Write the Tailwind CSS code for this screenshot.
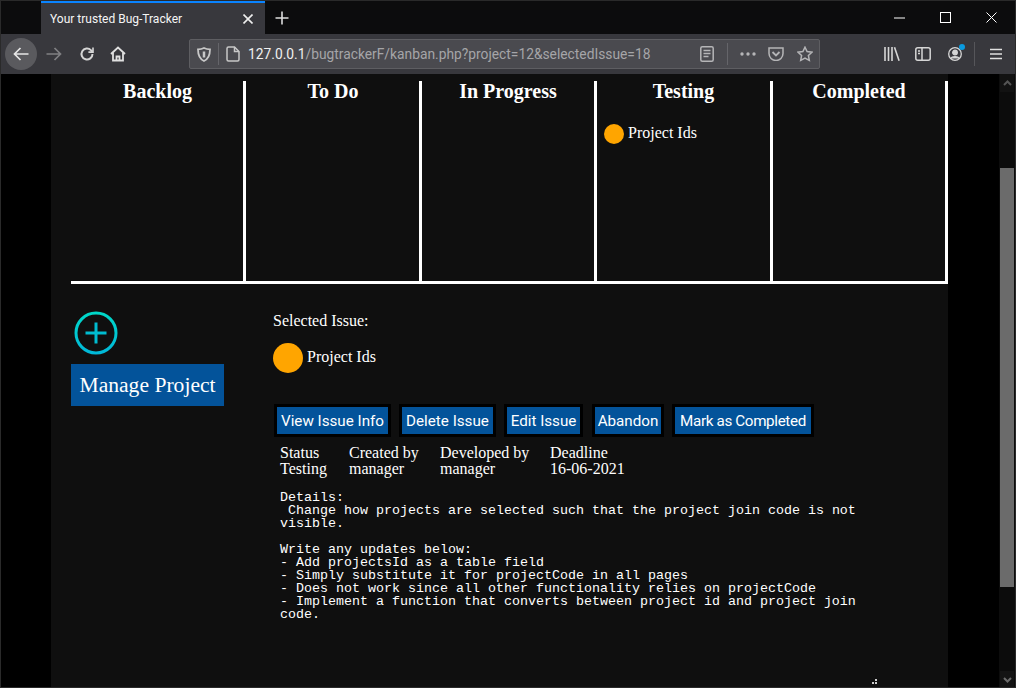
<!DOCTYPE html>
<html lang="en">
<head>
  <meta charset="UTF-8" />
  <title>Your trusted Bug-Tracker</title>
  <script src="https://cdn.jsdelivr.net/npm/@tailwindcss/browser@4"></script>
</head>
<body class="bg-black overflow-hidden">
<div class="relative w-[1016px] h-[688px] flex flex-col overflow-hidden font-['Liberation_Serif',serif] text-white">

  <!-- Tab strip -->
  <div class="h-[34px] bg-[#0c0c0d] flex items-stretch shrink-0 border-t border-[#0c0c0d]">
    <div class="ml-[41px] w-[224px] bg-[#38383d] border-t-2 border-[#0a84ff] flex items-center pl-[9px] pr-[12px] font-['Roboto',sans-serif] text-[12px] text-[#f5f5f5]">
      <span class="flex-1">Your trusted Bug-Tracker</span>
      <svg width="10" height="10" viewBox="0 0 10 10" class="stroke-[#eeeeee]" fill="none" stroke-width="1.6"><path d="M0.5 0.5l9 9M9.5 0.5l-9 9"/></svg>
    </div>
    <div class="w-[34px] flex items-center justify-center">
      <svg width="14" height="14" viewBox="0 0 14 14" class="stroke-[#dddddd]" fill="none" stroke-width="1.6"><path d="M7 0.5v13M0.5 7h13"/></svg>
    </div>
    <div class="flex-1"></div>
    <div class="w-[46px] flex items-center justify-center">
      <svg width="11" height="2" viewBox="0 0 11 2" class="stroke-white" fill="none"><path d="M0 1h11"/></svg>
    </div>
    <div class="w-[46px] flex items-center justify-center">
      <svg width="11" height="11" viewBox="0 0 11 11" class="stroke-white" fill="none"><rect x="0.5" y="0.5" width="10" height="10"/></svg>
    </div>
    <div class="w-[46px] mr-[2px] flex items-center justify-center">
      <svg width="11" height="11" viewBox="0 0 11 11" class="stroke-white" fill="none"><path d="M0.5 0.5l10 10M10.5 0.5l-10 10"/></svg>
    </div>
  </div>

  <!-- Toolbar -->
  <div class="h-[40px] bg-[#38383d] flex items-center shrink-0">
    <div class="ml-[5px] w-8 h-8 rounded-full bg-[#5a5a5e] flex items-center justify-center">
      <svg width="16" height="14" viewBox="0 0 16 14" class="stroke-[#e6e6e6]" fill="none" stroke-width="1.7"><path d="M15.5 7H1.5M7.5 1l-6 6 6 6"/></svg>
    </div>
    <svg width="16" height="14" viewBox="0 0 16 14" class="ml-[9px] stroke-[#808083]" fill="none" stroke-width="1.7"><path d="M0.5 7h14M8.5 1l6 6-6 6"/></svg>
    <svg width="16" height="16" viewBox="0 0 16 16" class="ml-[17px] stroke-[#d6d6d6]" fill="none" stroke-width="2"><path d="M13.5 8a5.5 5.5 0 1 1-1.6-3.9l1.6 1.6"/><path d="M14 1.500v4.600H9.400" stroke-width="1.600"/></svg>
    <svg width="16" height="16" viewBox="0 0 16 16" class="ml-[15px] stroke-[#e0e0e0]" fill="none" stroke-width="1.800"><path d="M1 8l7-6.500L15 8"/><path d="M3 6.500V14.500h10V6.500"/><path d="M6.500 14.500v-4h3v4"/></svg>

    <div class="ml-[63px] w-[631px] h-[30px] bg-[#4a4a4f] border border-[#5e5e62] rounded-[2px] flex items-center">
      <svg width="14" height="15" viewBox="0 0 14 15" class="ml-[7px] stroke-[#c8c8c8]" fill="none" stroke-width="1.800"><path d="M7 1c2 1 4 1.300 6 1.300 0 5-1.500 9.700-6 11.700C2.500 12 1 7.300 1 2.300 3 2.300 5 2 7 1z"/><path d="M7 4.500v6" stroke-width="2.500"/></svg>
      <div class="ml-[7px] w-px h-[22px] bg-[#65656a]"></div>
      <svg width="14" height="16" viewBox="0 0 14 16" class="ml-[7px] stroke-[#c8c8c8]" fill="none" stroke-width="1.500"><path d="M1 2.500a1.500 1.500 0 0 1 1.500-1.500H8.500L13 5.500v8a1.500 1.500 0 0 1-1.500 1.500h-9A1.500 1.500 0 0 1 1 13.500z"/><path d="M8.500 1v4.500H13"/></svg>
      <span class="ml-[8px] font-['Roboto',sans-serif] text-[13.8px] text-[#f0f0f0] whitespace-nowrap">127.0.0.1<span class="text-[#a5a5a8]">/bugtrackerF/kanban.php?project=12&amp;selectedIssue=18</span></span>
      <div class="flex-1"></div>
      <svg width="14" height="16" viewBox="0 0 14 16" class="stroke-[#b5b5b7]" fill="none" stroke-width="1.500"><rect x="0.800" y="0.800" width="12.400" height="14.400" rx="1.500"/><path d="M3.500 4.500h7M3.500 7.500h7M3.500 10.500h5"/></svg>
      <div class="ml-[13px] w-px h-[22px] bg-[#65656a]"></div>
      <svg width="16" height="4" viewBox="0 0 16 4" class="ml-[12px] fill-[#b5b5b7]"><circle cx="2" cy="2" r="1.700"/><circle cx="8" cy="2" r="1.700"/><circle cx="14" cy="2" r="1.700"/></svg>
      <svg width="16" height="14" viewBox="0 0 16 14" class="ml-[12px] stroke-[#b5b5b7]" fill="none" stroke-width="1.500"><path d="M1 1h14v5.500a7 7 0 0 1-14 0z"/><path d="M4.500 5l3.500 3.500L11.500 5" stroke-width="1.800"/></svg>
      <svg width="16" height="16" viewBox="0 0 16 16" class="ml-[13px] mr-[6px] stroke-[#b5b5b7]" fill="none" stroke-width="1.500"><path d="M8 1.200l2.100 4.400 4.800.6-3.500 3.300.9 4.800L8 12l-4.300 2.300.9-4.800L1.100 6.200l4.800-.6z"/></svg>
    </div>

    <svg width="16" height="14" viewBox="0 0 16 14" class="ml-[64px] stroke-[#d6d6d6]" fill="none" stroke-width="1.600"><path d="M1 0v14M4.500 0v14M8 0v14M10.500 0.300l4.600 13.400"/></svg>
    <svg width="16" height="14" viewBox="0 0 16 14" class="ml-[15px] stroke-[#d6d6d6]" fill="none" stroke-width="1.500"><rect x="0.800" y="0.800" width="14.400" height="12.400" rx="2"/><path d="M7 1v12M3 4h2M3 6.500h2"/></svg>
    <div class="relative ml-[17px] w-[14px] h-[14px]">
      <svg width="14" height="14" viewBox="0 0 14 14" class="stroke-[#d6d6d6]" fill="none" stroke-width="1.300"><circle cx="7" cy="7" r="6.300"/><circle cx="7" cy="5.500" r="2.300" class="fill-[#d6d6d6]"/><path d="M3 11.500c1-2.500 7-2.500 8 0" class="fill-[#d6d6d6]"/></svg>
      <div class="absolute -top-[3px] -right-[3px] w-[6px] h-[6px] rounded-full bg-[#0a9be0]"></div>
    </div>
    <div class="ml-[12px] w-px h-[24px] bg-[#56565a]"></div>
    <svg width="12" height="12" viewBox="0 0 12 12" class="ml-[15px] stroke-[#e0e0e0]" fill="none" stroke-width="1.700"><path d="M0 1.500h12M0 6h12M0 10.500h12"/></svg>
  </div>

  <!-- Page -->
  <div class="flex-1 flex min-h-0">
    <div class="w-[51px] bg-black shrink-0"></div>

    <main class="w-[897px] shrink-0 bg-[#0f0f0f] pl-[20px] pt-[7px]">
      <!-- Kanban board -->
      <div class="w-[877px] h-[203px] grid grid-cols-[175px_176px_175px_176px_175px] border-b-[3px] border-white">
        <div class="border-r-[3px] border-white">
          <h2 class="text-center text-[20px] font-bold leading-[20px] pl-[1px]">Backlog</h2>
        </div>
        <div class="border-r-[3px] border-white">
          <h2 class="text-center text-[20px] font-bold leading-[20px] pl-[1px]">To Do</h2>
        </div>
        <div class="border-r-[3px] border-white">
          <h2 class="text-center text-[20px] font-bold leading-[20px]">In Progress</h2>
        </div>
        <div class="border-r-[3px] border-white">
          <h2 class="text-center text-[20px] font-bold leading-[20px]">Testing</h2>
          <div class="mt-[22px] ml-[7px] flex items-center gap-[4px]">
            <div class="w-5 h-5 rounded-full bg-[#ffa500]"></div>
            <span class="text-[16px] leading-[20px] mb-[2px]">Project Ids</span>
          </div>
        </div>
        <div class="border-r-[3px] border-white">
          <h2 class="text-center text-[20px] font-bold leading-[20px]">Completed</h2>
        </div>
      </div>

      <div class="flex">
        <!-- Left column -->
        <div class="w-[202px] shrink-0 pt-[27px]">
          <svg width="44" height="44" viewBox="0 0 44 44" fill="none" class="ml-[3px] block">
            <defs>
              <linearGradient id="ring" x1="0" y1="0" x2="0" y2="1">
                <stop offset="0" stop-color="#00d8c8"/>
                <stop offset="1" stop-color="#00b8d8"/>
              </linearGradient>
            </defs>
            <circle cx="22" cy="22" r="20" stroke="url(#ring)" stroke-width="3"/>
            <path d="M22 11.500v21M11.500 22h21" stroke="#00bcd0" stroke-width="3"/>
          </svg>
          <div class="mt-[9px] w-[153px] h-[42px] pt-px bg-[#03539a] flex items-center justify-center text-[21.6px]">Manage Project</div>
        </div>

        <!-- Selected issue -->
        <div class="pt-[28px]">
          <p class="text-[16px] leading-[18px]">Selected Issue:</p>
          <div class="mt-[13px] flex items-center gap-[4px]">
            <div class="w-[30px] h-[30px] rounded-full bg-[#ffa500]"></div>
            <span class="text-[16px] leading-[18px] mb-[2px]">Project Ids</span>
          </div>

          <div class="mt-[31px] ml-px flex font-['Roboto',sans-serif] text-[15.2px] whitespace-nowrap">
            <div class="w-[117px] h-[33px] pt-[2px] border-[3px] border-black bg-[#03539a] flex items-center justify-center">View Issue Info</div>
            <div class="ml-[8px] w-[97px] h-[33px] pt-[2px] border-[3px] border-black bg-[#03539a] flex items-center justify-center">Delete Issue</div>
            <div class="ml-[8px] w-[79px] h-[33px] pt-[2px] border-[3px] border-black bg-[#03539a] flex items-center justify-center">Edit Issue</div>
            <div class="ml-[9px] w-[72px] h-[33px] pt-[2px] border-[3px] border-black bg-[#03539a] flex items-center justify-center">Abandon</div>
            <div class="ml-[8px] w-[142px] h-[33px] pt-[2px] border-[3px] border-black bg-[#03539a] flex items-center justify-center tracking-[-0.35px]">Mark as Completed</div>
          </div>

          <div class="mt-[8px] ml-[7px] grid grid-cols-[69px_91px_110px_auto] text-[16px] leading-[16px]">
            <div><div>Status</div><div>Testing</div></div>
            <div><div>Created by</div><div>manager</div></div>
            <div><div>Developed by</div><div>manager</div></div>
            <div><div>Deadline</div><div>16-06-2021</div></div>
          </div>

          <div class="relative mt-[14px] ml-[7px] w-[600px] h-[198px]">
            <pre class="w-[580px] font-['Liberation_Mono',monospace] text-[13.33px] leading-[13px] whitespace-pre-wrap">Details:
 Change how projects are selected such that the project join code is not visible.

Write any updates below:
- Add projectsId as a table field
- Simply substitute it for projectCode in all pages
- Does not work since all other functionality relies on projectCode
- Implement a function that converts between project id and project join code.</pre>
            <svg width="5" height="5" viewBox="0 0 5 5" class="absolute left-[592px] top-[188px] fill-[#cccccc]"><rect x="3" y="0" width="2" height="2"/><rect x="0" y="3" width="2" height="2"/><rect x="3" y="3" width="2" height="2"/></svg>
          </div>
        </div>
      </div>
    </main>

    <div class="w-[51px] bg-black shrink-0"></div>

    <!-- Scrollbar -->
    <div class="w-[17px] shrink-0 bg-[#0c0c0c] flex flex-col items-stretch pl-px pr-[2px]">
      <div class="h-[18px] flex items-center justify-center bg-[#121212]">
        <svg width="9" height="6" viewBox="0 0 9 6" class="stroke-[#555555]" fill="none" stroke-width="2"><path d="M1 5l3.500-3.500L8 5"/></svg>
      </div>
      <div class="mt-[76px] h-[419px] bg-[#6b6b6b]"></div>
      <div class="flex-1"></div>
      <div class="h-[17px] flex items-center justify-center bg-[#141414]">
        <svg width="9" height="6" viewBox="0 0 9 6" class="stroke-[#6b6b6b]" fill="none" stroke-width="2"><path d="M1 1l3.500 3.500L8 1"/></svg>
      </div>
    </div>
  </div>

  <!-- Window frame -->
  <div class="absolute inset-0 border border-[#2a2a2a] pointer-events-none"></div>
</div>
</body>
</html>
